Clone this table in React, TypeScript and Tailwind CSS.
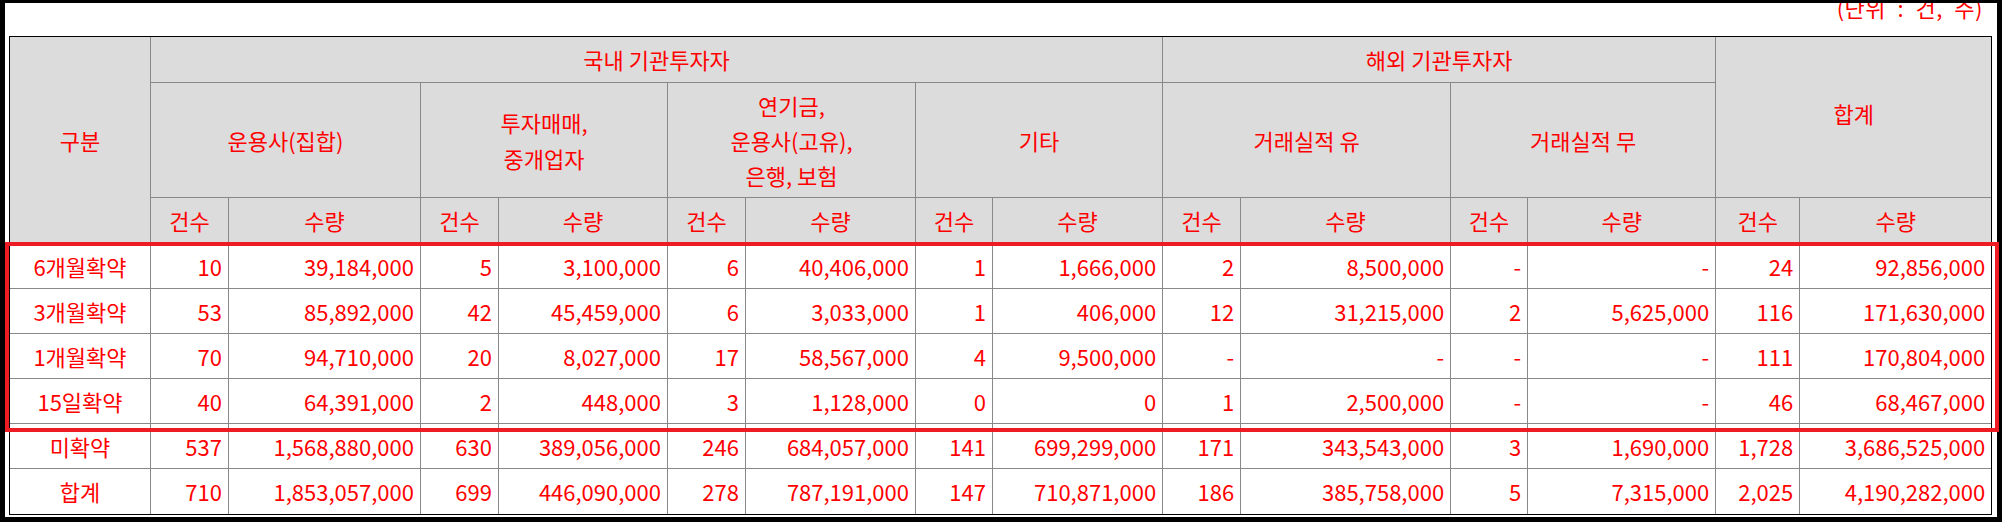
import React from 'react';

// 확약기간별 배정 현황 표 (단위 : 건, 주)

type Row = { label: string; values: string[] };

const COL_WIDTHS = [141, 78, 192, 78, 169, 78, 170, 77, 170, 78, 210, 77, 188, 84, 191];

const ROWS: Row[] = [
    { label: '6개월확약', values: ['10', '39,184,000', '5', '3,100,000', '6', '40,406,000', '1', '1,666,000', '2', '8,500,000', '-', '-', '24', '92,856,000'] },
    { label: '3개월확약', values: ['53', '85,892,000', '42', '45,459,000', '6', '3,033,000', '1', '406,000', '12', '31,215,000', '2', '5,625,000', '116', '171,630,000'] },
    { label: '1개월확약', values: ['70', '94,710,000', '20', '8,027,000', '17', '58,567,000', '4', '9,500,000', '-', '-', '-', '-', '111', '170,804,000'] },
    { label: '15일확약', values: ['40', '64,391,000', '2', '448,000', '3', '1,128,000', '0', '0', '1', '2,500,000', '-', '-', '46', '68,467,000'] },
    { label: '미확약', values: ['537', '1,568,880,000', '630', '389,056,000', '246', '684,057,000', '141', '699,299,000', '171', '343,543,000', '3', '1,690,000', '1,728', '3,686,525,000'] },
    { label: '합계', values: ['710', '1,853,057,000', '699', '446,090,000', '278', '787,191,000', '147', '710,871,000', '186', '385,758,000', '5', '7,315,000', '2,025', '4,190,282,000'] },
];

const SUB_GROUPS = 7;

const head = 'bg-[#dcdcdc] text-center align-middle p-0 border-[#888888]';

export default function App() {
    return (
        <div className="relative w-[2006px] h-[522px] bg-white font-['Noto_Sans_CJK_KR',sans-serif] text-[22px] text-[#ff0000]">
            <div className="w-[2002px] h-[522px] bg-black pt-[3px] pl-[5px] pr-[5px] pb-[5px]">
                <div className="h-full bg-white overflow-hidden pl-[4px] pr-[5px]">
                    {/* 단위 */}
                    <div className="h-[33px] flex justify-end pr-[9px]">
                        <span className="leading-[22px] -mt-[7px] [word-spacing:6px] tracking-[0.5px]">(단위 : 건, 주)</span>
                    </div>

                    <div className="border border-black w-[1983px]">
                        <table className="table-fixed border-separate border-spacing-0 w-[1981px]">
                            <colgroup>
                                {COL_WIDTHS.map((w, i) => (
                                    <col key={i} style={{ width: w }} />
                                ))}
                            </colgroup>
                            <thead>
                                <tr className="h-[46px]">
                                    <th rowSpan={3} className={`${head} font-normal border-r border-b`}>구분</th>
                                    <th colSpan={8} className={`${head} font-normal border-r border-b`}>국내 기관투자자</th>
                                    <th colSpan={4} className={`${head} font-normal border-r border-b`}>해외 기관투자자</th>
                                    <th colSpan={2} rowSpan={2} className={`${head} font-normal border-b`}>
                                        <div className="pb-[8px]">합계</div>
                                    </th>
                                </tr>
                                <tr className="h-[115px]">
                                    <th colSpan={2} className={`${head} font-normal border-r border-b`}>운용사(집합)</th>
                                    <th colSpan={2} className={`${head} font-normal border-r border-b leading-[36px]`}>
                                        투자매매,
                                        <br />
                                        중개업자
                                    </th>
                                    <th colSpan={2} className={`${head} font-normal border-r border-b leading-[35px]`}>
                                        연기금,
                                        <br />
                                        운용사(고유),
                                        <br />
                                        은행, 보험
                                    </th>
                                    <th colSpan={2} className={`${head} font-normal border-r border-b`}>기타</th>
                                    <th colSpan={2} className={`${head} font-normal border-r border-b`}>거래실적 유</th>
                                    <th colSpan={2} className={`${head} font-normal border-r border-b`}>거래실적 무</th>
                                </tr>
                                <tr className="h-[46px]">
                                    {Array.from({ length: SUB_GROUPS }).map((_, i) => (
                                        <React.Fragment key={i}>
                                            <th className={`${head} font-normal border-r border-b`}>건수</th>
                                            <th className={`${head} font-normal border-b ${i < SUB_GROUPS - 1 ? 'border-r' : ''}`}>수량</th>
                                        </React.Fragment>
                                    ))}
                                </tr>
                            </thead>
                            <tbody>
                                {ROWS.map((row, r) => {
                                    const last = r === ROWS.length - 1;
                                    return (
                                        <tr key={row.label} className="h-[45px]">
                                            <td className={`text-center align-middle p-0 border-r border-[#888888] ${last ? '' : 'border-b'}`}>
                                                {row.label}
                                            </td>
                                            {row.values.map((v, c) => (
                                                <td
                                                    key={c}
                                                    className={`text-right align-middle p-0 pr-[6px] border-[#888888] ${last ? '' : 'border-b'} ${c < row.values.length - 1 ? 'border-r' : ''}`}
                                                >
                                                    {v}
                                                </td>
                                            ))}
                                        </tr>
                                    );
                                })}
                            </tbody>
                        </table>
                    </div>
                </div>
            </div>

            {/* 강조 표시 박스 */}
            <div className="absolute left-[5px] top-[242px] w-[1994px] h-[190px] border-[4px] border-[#ed1c24]" />
        </div>
    );
}
